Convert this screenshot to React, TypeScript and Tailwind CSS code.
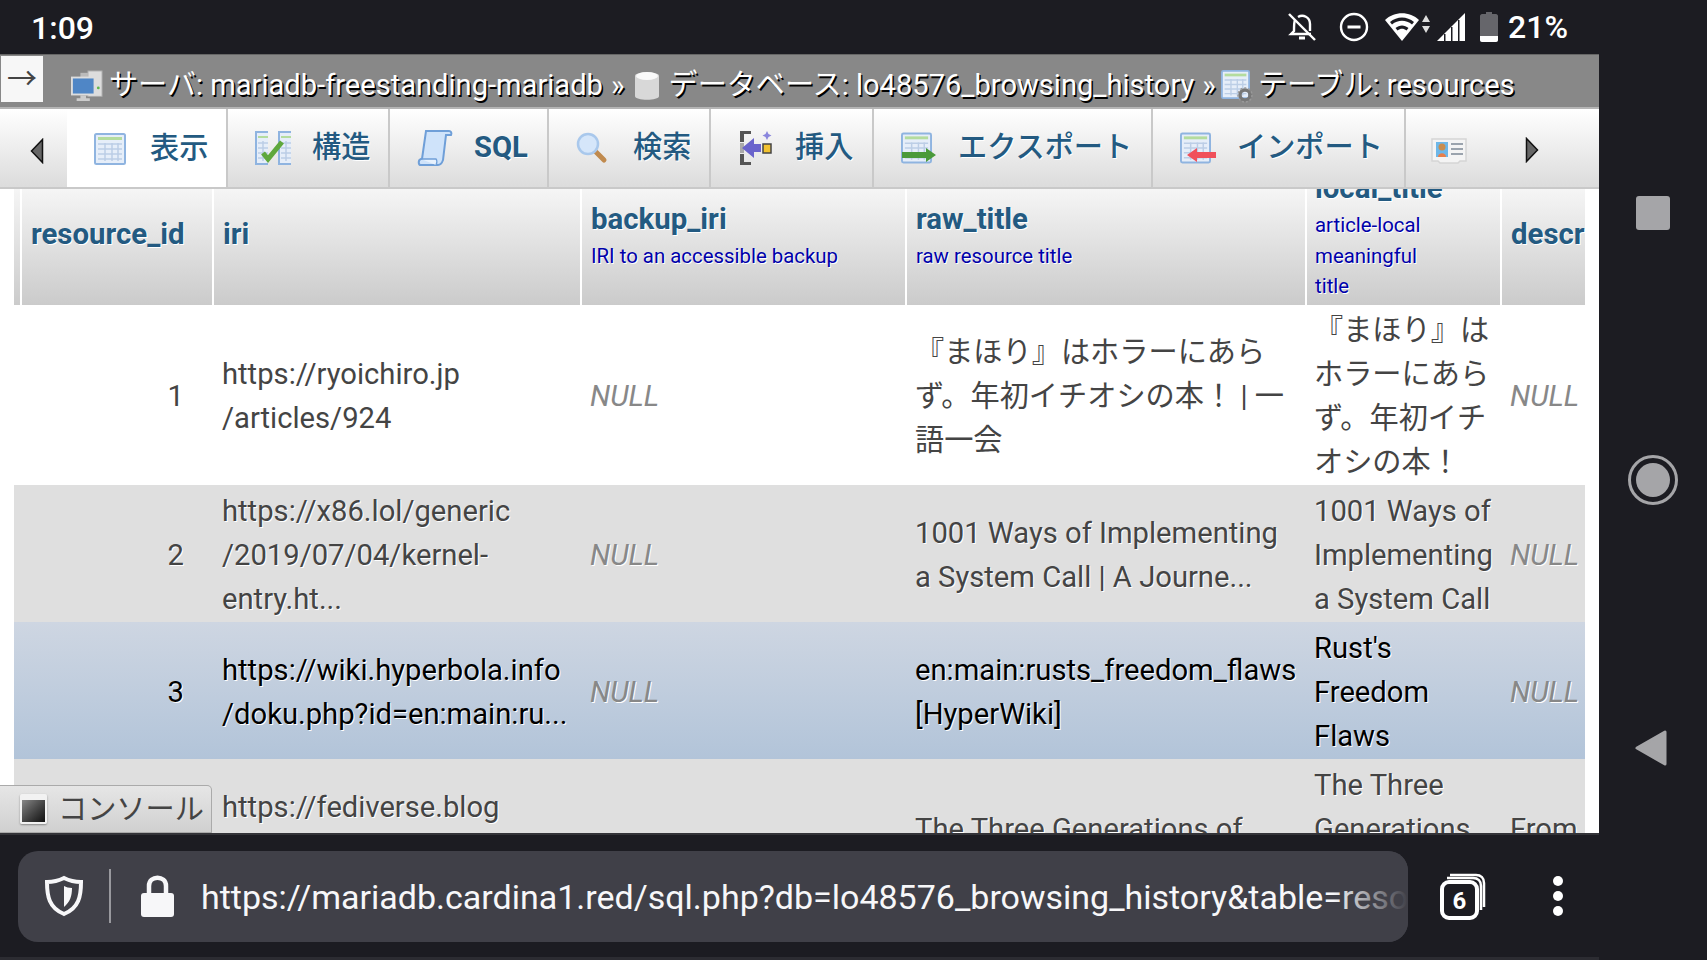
import React from "react";

const fontStack = "font-['Roboto','Noto_Sans_CJK_JP',sans-serif]";

// --- phpMyAdmin style toolbar icons ---
const TableIcon = ({ className = "" }: { className?: string }) => (
  <svg viewBox="0 0 32 32" className={className}>
    <rect x="1" y="1" width="30" height="30" rx="1.5" fill="#e6eef9" stroke="#8fb4e0" strokeWidth="2" />
    <rect x="4" y="4" width="24" height="3" fill="#b4dc9e" />
    <path d="M4 11h24M4 16h24M4 21h24M4 26h24M11 10v18M18 10v18M24 10v18" stroke="#bccee6" strokeWidth="1.5" fill="none" />
  </svg>
);

const StructureIcon = () => (
  <svg viewBox="0 0 36 34" className="w-[36px] h-[34px]">
    <path d="M0 1h13v32H0z" fill="#e6eef9" />
    <path d="M13 1H1v32h12" fill="none" stroke="#8fb4e0" strokeWidth="2" />
    <path d="M23 1h13v32H23z" fill="#e6eef9" />
    <path d="M36 1H24v32h12" fill="none" stroke="#8fb4e0" strokeWidth="2" />
    <path d="M3 6h10M26 6h10" stroke="#b4dc9e" strokeWidth="2" />
    <path d="M3 12h10M3 17h10M3 22h10M3 27h10M26 12h10M26 17h10M26 22h10M26 27h10M8 10v20M31 10v20" stroke="#bccee6" strokeWidth="1.5" />
    <path d="M8 22l5 6 14-17" stroke="#5fa83c" strokeWidth="5" fill="none" />
  </svg>
);

const SqlIcon = () => (
  <svg viewBox="0 0 36 38" className="w-[36px] h-[38px]">
    <path d="M9 2h23c2 0 3 2 2 4h-5l-3 25c-1 3-3 5-5 5H4c-3 0-3-5 0-6h1z" fill="#cfe3fa" stroke="#6f9fd8" strokeWidth="2" />
    <path d="M4 30h15c1 1 1 4 0 6" fill="#e8f2fd" stroke="#6f9fd8" strokeWidth="1.5" />
  </svg>
);

const SearchIcon = () => (
  <svg viewBox="0 0 32 32" className="w-[32px] h-[32px]">
    <path d="M19 19l9 9" stroke="#c08a4e" strokeWidth="5" strokeLinecap="round" />
    <circle cx="12" cy="12" r="10" fill="#d5e6fa" stroke="#a9c8ec" strokeWidth="2.5" />
  </svg>
);

const InsertIcon = () => (
  <svg viewBox="0 0 34 36" className="w-[34px] h-[36px]">
    <path d="M2 1h11v3H6v8H2zM2 24h4v8h7v3H2z" fill="#555" />
    <path d="M2 13h4v10H2z" fill="#aaa" />
    <path d="M4 18l12-10v6h7v8h-7v6z" fill="#6a64cc" />
    <rect x="25" y="14" width="8" height="9" fill="#f2c230" stroke="#444" strokeWidth="1.5" />
    <path d="M29 1l1.500 3 3 1.500-3 1.500-1.500 3-1.500-3-3-1.500 3-1.500z" fill="#8a86dd" />
  </svg>
);

const ExportIcon = () => (
  <div className="relative w-[36px] h-[32px]">
    <TableIcon className="w-[31px] h-[32px]" />
    <svg viewBox="0 0 36 14" className="absolute left-0 bottom-[2px] w-[36px] h-[14px]">
      <path d="M1 4h24V0l10 7-10 7v-4H1z" fill="#4a9a3a" />
    </svg>
  </div>
);

const ImportIcon = () => (
  <div className="relative w-[36px] h-[32px]">
    <TableIcon className="w-[31px] h-[32px]" />
    <svg viewBox="0 0 30 14" className="absolute left-[6px] bottom-[2px] w-[30px] h-[14px]">
      <path d="M30 4H11V0L1 7l10 7v-4h19z" fill="#f0505a" />
    </svg>
  </div>
);

const CardIcon = () => (
  <svg viewBox="0 0 36 32" className="w-[36px] h-[32px]">
    <path d="M1 5h34v22h-6l-2 2H9l-2-2H1z" fill="#f4f4f4" stroke="#d5d5d5" strokeWidth="1.5" />
    <rect x="5" y="8" width="12" height="15" fill="#6db7e8" />
    <circle cx="11" cy="13" r="3.5" fill="#c88d4f" />
    <path d="M7 23c0-5 8-5 8 0z" fill="#e87f4a" />
    <path d="M20 10h12M20 15h12M20 20h12" stroke="#9aa3ad" strokeWidth="2" />
  </svg>
);

const ServerIcon = () => (
  <svg viewBox="0 0 34 34" className="w-[34px] h-[32px]">
    <rect x="18" y="1" width="15" height="27" fill="#ddd" stroke="#aaa" />
    <rect x="10" y="3" width="8" height="24" fill="#bbb" />
    <rect x="1" y="8" width="24" height="18" fill="#4f86c6" stroke="#ddd" strokeWidth="2" />
    <path d="M10 27h6v3h4v3H6v-3h4z" fill="#ccc" />
    <circle cx="29" cy="19" r="1.5" fill="#5fb84c" />
  </svg>
);

const DbIcon = () => (
  <svg viewBox="0 0 26 30" className="w-[26px] h-[30px]">
    <path d="M1 5c0-5 24-5 24 0v20c0 5-24 5-24 0z" fill="#d8d8d8" />
    <ellipse cx="13" cy="5" rx="11" ry="4" fill="#fafafa" />
  </svg>
);

const TableGearIcon = () => (
  <div className="relative w-[32px] h-[34px]">
    <TableIcon className="w-[29px] h-[31px]" />
    <svg viewBox="0 0 16 16" className="absolute right-0 bottom-0 w-[16px] h-[16px]">
      <circle cx="8" cy="8" r="5" fill="none" stroke="#777" strokeWidth="3.5" />
      <circle cx="8" cy="8" r="7" fill="none" stroke="#999" strokeWidth="1.5" strokeDasharray="2 2" />
    </svg>
  </div>
);

const tabs = [
  { label: "構造", icon: <StructureIcon />, width: "w-[162px]" },
  { label: "SQL", icon: <SqlIcon />, width: "w-[159px]", bold: true },
  { label: "検索", icon: <SearchIcon />, width: "w-[162px]" },
  { label: "挿入", icon: <InsertIcon />, width: "w-[163px]" },
  { label: "エクスポート", icon: <ExportIcon />, width: "w-[279px]" },
  { label: "インポート", icon: <ImportIcon />, width: "w-[253px]" },
];

const StatusIcons = () => (
  <div className="flex items-center text-white">
    <svg viewBox="0 0 30 30" className="w-[30px] h-[30px]" fill="none" stroke="#fff" strokeWidth="2.4">
      <path d="M8 8c-1 2-1 4-1 11l-3 3h20M11 5c5-3 12 0 12 7v7" />
      <path d="M12 26h6" strokeWidth="3" />
      <path d="M2 2l26 26" />
    </svg>
    <svg viewBox="0 0 30 30" className="w-[30px] h-[30px] ml-[22px]" fill="none" stroke="#fff" strokeWidth="2.4">
      <circle cx="15" cy="15" r="13" />
      <path d="M8.500 15h13" strokeWidth="3" />
    </svg>
    <svg viewBox="0 0 46 28" className="w-[46px] h-[28px] ml-[16px]" fill="#fff">
      <path d="M0 7c9-9 25-9 34 0L17 28z" fill="#fff" />
      <path d="M5 9c7-6 17-6 24 0l-2 2.500c-6-5-14-5-20 0z" fill="#1c1c22" />
      <path d="M10.500 15c4-3.500 9-3.500 13 0l-2 2.500c-3-2.500-6-2.500-9 0z" fill="#1c1c22" />
      <path d="M37 9l4-7 4 7zM37 13l4 7 4-7z" fill="#ddd" />
    </svg>
    <svg viewBox="0 0 28 28" className="w-[28px] h-[28px] ml-[6px]" fill="#fff">
      <path d="M0 28L28 0v28z" />
      <path d="M7 21h1.500v7H7zM14 14h1.500v14H14zM21 7h1.500v21H21z" fill="#1c1c22" />
    </svg>
    <svg viewBox="0 0 18 30" className="w-[18px] h-[30px] ml-[15px]">
      <path d="M6 0h6v2h4c1 0 2 1 2 2v24c0 1-1 2-2 2H2c-1 0-2-1-2-2V4c0-1 1-2 2-2h4z" fill="#66666b" />
      <path d="M0 24h18v4c0 1-1 2-2 2H2c-1 0-2-1-2-2z" fill="#fff" />
    </svg>
    <span className="ml-[10px] text-[32px] font-medium leading-none">21%</span>
  </div>
);

const headerCell =
  "h-[142px] border-l-2 border-white bg-linear-to-b from-white to-[#cbcbcb] text-left align-middle overflow-hidden";
const headerTitle = "block text-[29.4px] leading-[44px] font-bold text-[#235a81] [text-shadow:1px_1px_0_#fff]";
const headerSub = "block text-[20.4px] leading-[30.500px] font-normal text-[#0000aa] [text-shadow:1px_1px_0_#fff]";

const Null = () => <span className="italic text-[#888]">NULL</span>;

const App = () => {
  return (
    <div className={`w-[1707px] h-[960px] overflow-hidden bg-[#1c1c22] flex flex-col ${fontStack}`}>
      {/* android status bar */}
      <div className="h-[54px] shrink-0 flex items-center justify-between pl-[31px] pr-[139px]">
        <span className="text-[32px] font-medium text-white leading-none pt-[2px]">1:09</span>
        <StatusIcons />
      </div>

      <div className="flex-1 flex min-h-0">
        <div className="w-[1599px] flex flex-col">
          {/* phpmyadmin page */}
          <div className="relative h-[779px] shrink-0 bg-white flex flex-col overflow-hidden">
            <div className="h-[55px] shrink-0 bg-[#888] border-t border-[#666] border-b-2 border-b-[#b5b5b5] flex pl-[1px] pt-[1px]">
              <div className="w-[42px] h-[46px] bg-[#f7f7f7] flex items-center justify-center text-[#444] text-[30px] leading-none">
                →
              </div>
              <div className="flex items-center gap-[5px] pl-[27px] pt-[9px] text-[29.1px] font-normal text-white [text-shadow:1.500px_1.500px_0_#000] whitespace-nowrap">
                <ServerIcon />
                <span>サーバ: mariadb-freestanding-mariadb</span>
                <span className="ml-[3px]">»</span>
                <span className="mx-[4px]"><DbIcon /></span>
                <span>データベース: lo48576_browsing_history</span>
                <span className="ml-[3px]">»</span>
                <TableGearIcon />
                <span>テーブル: resources</span>
              </div>
            </div>

            {/* tab strip */}
            <div className="h-[80px] shrink-0 bg-linear-to-b from-white to-[#dcdcdc] border-b-2 border-[#c9c9c9] flex items-stretch overflow-hidden">
              <div className="w-[67px] shrink-0 flex items-center justify-center pl-[6px] pt-[6px]">
                <svg viewBox="0 0 14 26" className="w-[14px] h-[26px]">
                  <path d="M12.500 1.500v23L1.500 13z" fill="#666" stroke="#111" strokeWidth="1.500" />
                </svg>
              </div>
              <div className="w-[161px] shrink-0 -mb-[2px] bg-white border-r-2 border-[#c9c9c9] flex items-center pl-[27px] gap-[24px] text-[29.2px] font-medium text-[#235a81]">
                <TableIcon className="w-[32px] h-[32px]" />
                <span>表示</span>
              </div>
              {tabs.map((t) => (
                <div
                  key={t.label}
                  className={`${t.width} shrink-0 border-r-2 border-[#c9c9c9] flex items-center pl-[27px] text-[29.2px] ${t.bold ? "font-bold" : "font-medium"} text-[#235a81] [text-shadow:1px_1px_0_#fff]`}
                >
                  <span className="w-[57px] shrink-0">{t.icon}</span>
                  <span className="whitespace-nowrap">{t.label}</span>
                </div>
              ))}
              <div className="flex-1 flex items-center justify-between pl-[25px] pr-[60px] pt-[3px]">
                <CardIcon />
                <svg viewBox="0 0 14 26" className="w-[14px] h-[26px]">
                  <path d="M1.500 1.500v23L12.500 13z" fill="#666" stroke="#111" strokeWidth="1.500" />
                </svg>
              </div>
            </div>

            {/* result table, header partly scrolled under the tab strip */}
            <div className="flex-1 overflow-hidden pl-[14px]">
              <table className="table-fixed border-collapse w-[1571px] -mt-[26px] text-[29.2px] leading-[44px] font-normal text-[#444]">
                <colgroup>
                  <col className="w-[7px]" />
                  <col className="w-[192px]" />
                  <col className="w-[368px]" />
                  <col className="w-[325px]" />
                  <col className="w-[400px]" />
                  <col className="w-[195px]" />
                  <col className="w-[84px]" />
                </colgroup>
                <thead>
                  <tr>
                    <th className="h-[142px] bg-linear-to-b from-white to-[#cbcbcb]" />
                    <th className={`${headerCell} pl-[9px]`}>
                      <span className={headerTitle}>resource_id</span>
                    </th>
                    <th className={`${headerCell} pl-[9px]`}>
                      <span className={headerTitle}>iri</span>
                    </th>
                    <th className={`${headerCell} pl-[9px]`}>
                      <span className={headerTitle}>backup_iri</span>
                      <span className={headerSub}>IRI to an accessible backup</span>
                    </th>
                    <th className={`${headerCell} pl-[9px]`}>
                      <span className={headerTitle}>raw_title</span>
                      <span className={headerSub}>raw resource title</span>
                    </th>
                    <th className={`${headerCell} pl-[8px]`}>
                      <span className={headerTitle}>local_title</span>
                      <span className={headerSub}>
                        article-local
                        <br />
                        meaningful
                        <br />
                        title
                      </span>
                    </th>
                    <th className={`${headerCell} pl-[9px]`}>
                      <span className={headerTitle}>descr</span>
                    </th>
                  </tr>
                </thead>
                <tbody>
                  <tr className="h-[180px] bg-white [&>td]:pt-[2px]">
                    <td />
                    <td className="text-right pr-[29px]">1</td>
                    <td className="pl-[9px]">
                      https://ryoichiro.jp
                      <br />
                      /articles/924
                    </td>
                    <td className="pl-[9px]"><Null /></td>
                    <td className="pl-[9px] whitespace-nowrap">
                      『まほり』はホラーにあら
                      <br />
                      ず。年初イチオシの本！ | 一
                      <br />
                      語一会
                    </td>
                    <td className="pl-[8px] whitespace-nowrap">
                      『まほり』は
                      <br />
                      ホラーにあら
                      <br />
                      ず。年初イチ
                      <br />
                      オシの本！
                    </td>
                    <td className="pl-[9px]"><Null /></td>
                  </tr>
                  <tr className="h-[137px] bg-[#dfdfdf] [text-shadow:1px_1px_0_#fff] [&>td]:pt-[2px]">
                    <td />
                    <td className="text-right pr-[29px]">2</td>
                    <td className="pl-[9px]">
                      https://x86.lol/generic
                      <br />
                      /2019/07/04/kernel-
                      <br />
                      entry.ht...
                    </td>
                    <td className="pl-[9px]"><Null /></td>
                    <td className="pl-[9px] whitespace-nowrap">
                      1001 Ways of Implementing
                      <br />
                      a System Call | A Journe...
                    </td>
                    <td className="pl-[8px] whitespace-nowrap">
                      1001 Ways of
                      <br />
                      Implementing
                      <br />
                      a System Call
                    </td>
                    <td className="pl-[9px]"><Null /></td>
                  </tr>
                  <tr className="h-[137px] bg-linear-to-b from-[#ced6e2] to-[#b2c4d9] text-black [text-shadow:1px_1px_0_#fff] [&>td]:pt-[2px]">
                    <td />
                    <td className="text-right pr-[29px]">3</td>
                    <td className="pl-[9px] whitespace-nowrap">
                      https://wiki.hyperbola.info
                      <br />
                      /doku.php?id=en:main:ru...
                    </td>
                    <td className="pl-[9px]"><Null /></td>
                    <td className="pl-[9px] whitespace-nowrap">
                      en:main:rusts_freedom_flaws
                      <br />
                      [HyperWiki]
                    </td>
                    <td className="pl-[8px]">
                      Rust's
                      <br />
                      Freedom
                      <br />
                      Flaws
                    </td>
                    <td className="pl-[9px]"><Null /></td>
                  </tr>
                  <tr className="h-[184px] bg-[#dfdfdf] align-top [text-shadow:1px_1px_0_#fff]">
                    <td />
                    <td />
                    <td className="pl-[9px] pt-[26px] align-top">https://fediverse.blog</td>
                    <td />
                    <td className="pl-[9px] pt-[48px] align-top">The Three Generations of</td>
                    <td className="pl-[8px] pt-[4px] align-top">
                      The Three
                      <br />
                      Generations
                    </td>
                    <td className="pl-[9px] pt-[48px] align-top">From</td>
                  </tr>
                </tbody>
              </table>
            </div>

            {/* console tab */}
            <div className="absolute left-0 bottom-0 w-[212px] h-[48px] bg-linear-to-b from-[#e6e6e6] to-[#d0d0d0] border border-[#aaa] border-l-0 rounded-tr-[5px] flex items-center pl-[20px] gap-[11px] text-[29.2px] font-normal text-[#444]">
              <div className="w-[27px] h-[30px] rounded-[2px] border-2 border-t-[6px] border-[#f2f2f2] shadow-[0_1px_2px_#888] bg-linear-to-br from-[#888] to-[#111]" />
              <span className="whitespace-nowrap pt-[2px]">コンソール</span>
            </div>
          </div>

          {/* firefox bottom bar */}
          <div className="flex-1 border-t-2 border-[#333338] border-b-[3px] border-b-[#2c2c32] flex items-center pl-[18px]">
            <div className="relative w-[1390px] h-[91px] rounded-[20px] bg-[#404048] flex items-center pl-[26px] overflow-hidden">
              <svg viewBox="0 0 40 42" className="w-[40px] h-[42px] shrink-0" fill="none">
                <path d="M20 3c6 3 11 4 17 4 0 14-2 26-17 32C5 33 3 21 3 7c6 0 11-1 17-4z" stroke="#f7f7f9" strokeWidth="4" />
                <path d="M20 11c2 1 5 2 8 2 0 8-2 14-8 19z" fill="#f7f7f9" />
              </svg>
              <div className="w-[2px] h-[54px] bg-[#99999e] ml-[25px] shrink-0" />
              <svg viewBox="0 0 35 42" className="w-[35px] h-[42px] ml-[29px] shrink-0">
                <path d="M9 19v-8c0-11 17-11 17 0v8" fill="none" stroke="#f7f7f9" strokeWidth="4.500" />
                <rect x="1" y="18" width="33" height="24" rx="3" fill="#f7f7f9" />
              </svg>
              <span className="ml-[26px] pt-[2px] text-[34px] text-[#f7f7f9] font-normal whitespace-nowrap">
                https://mariadb.cardina1.red/sql.php?db=lo48576_browsing_history&amp;table=resources
              </span>
              <div className="absolute right-0 top-0 bottom-0 w-[75px] bg-linear-to-r from-transparent to-[#404048]" />
            </div>
            <svg viewBox="0 0 46 48" className="w-[46px] h-[48px] ml-[32px]" fill="none" stroke="#fff">
              <path d="M10 3h26c5 0 8 3 8 8v24" strokeWidth="2.500" />
              <path d="M7 6h26c5 0 8 3 8 8v24" strokeWidth="2.500" />
              <rect x="2" y="10" width="35" height="36" rx="7" strokeWidth="4" />
              <text x="19.500" y="37" textAnchor="middle" fill="#fff" stroke="none" fontSize="24" fontWeight="700" fontFamily="Roboto">
                6
              </text>
            </svg>
            <div className="ml-[67px] flex flex-col gap-[5px]">
              <div className="w-[10px] h-[10px] rounded-full bg-white" />
              <div className="w-[10px] h-[10px] rounded-full bg-white" />
              <div className="w-[10px] h-[10px] rounded-full bg-white" />
            </div>
          </div>
        </div>

        {/* android nav bar */}
        <div className="flex-1 flex flex-col items-center pt-[142px]">
          <div className="w-[34px] h-[34px] rounded-[3px] bg-[#a5a5a8]" />
          <div className="mt-[225px] w-[50px] h-[50px] rounded-full border-[3px] border-[#a5a5a8] flex items-center justify-center">
            <div className="w-[34px] h-[34px] rounded-full bg-[#a5a5a8]" />
          </div>
          <svg viewBox="0 0 32 36" className="w-[32px] h-[36px] mt-[225px] -ml-[4px]">
            <path d="M30 2v32L2 18z" fill="#a5a5a8" stroke="#a5a5a8" strokeWidth="3" strokeLinejoin="round" />
          </svg>
        </div>
      </div>
    </div>
  );
};

export default App;
